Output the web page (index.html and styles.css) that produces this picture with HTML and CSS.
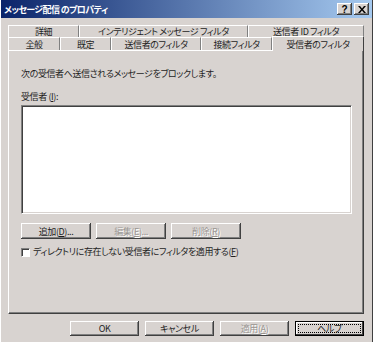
FILE: index.html
```html
<!DOCTYPE html>
<html lang="ja">
<head>
    <meta charset="UTF-8">
    <title>メッセージ配信 のプロパティ</title>
    <link rel="stylesheet" href="styles.css">
</head>
<body>
    <div class="window">
        <div class="titlebar">
            <span class="title">メッセージ配信 のプロパティ</span>
            <div class="caption-buttons">
                <span class="cap-btn help">?</span>
                <span class="cap-btn close">
                    <svg width="8" height="7" viewBox="0 0 8 7">
                        <path d="M0 0h2l2 2.5L6 0h2L5 3.5 8 7H6L4 4.5 2 7H0l3-3.5z" fill="#000"/>
                    </svg>
                </span>
            </div>
        </div>

        <div class="tabs">
            <div class="tab-row back">
                <div class="tab t-details">詳細</div>
                <div class="tab t-intel">インテリジェント メッセージ フィルタ</div>
                <div class="tab t-senderid">送信者 ID フィルタ</div>
            </div>
            <div class="tab-row front">
                <div class="tab t-general">全般</div>
                <div class="tab t-default">既定</div>
                <div class="tab t-sender">送信者のフィルタ</div>
                <div class="tab t-conn">接続フィルタ</div>
                <div class="tab t-recip active">受信者のフィルタ</div>
            </div>
        </div>

        <div class="panel">
            <p class="intro">次の受信者へ送信されるメッセージをブロックします。</p>
            <p class="label">受信者 (<u>I</u>):</p>
            <div class="listbox"></div>

            <div class="list-buttons">
                <button class="btn">追加(<u>D</u>)...</button>
                <button class="btn" disabled>編集(<u>E</u>)...</button>
                <button class="btn" disabled>削除(<u>R</u>)</button>
            </div>

            <label class="check">
                <span class="box"></span>
                <span>ディレクトリに存在しない受信者にフィルタを適用する(<u>F</u>)</span>
            </label>
        </div>

        <div class="footer">
            <button class="btn">OK</button>
            <button class="btn">キャンセル</button>
            <button class="btn" disabled>適用(<u>A</u>)</button>
            <button class="btn focused"><span class="focus-rect">ヘルプ</span></button>
        </div>
    </div>
</body>
</html>
```

FILE: styles.css
```css
body {
    margin: 0;
    padding: 0;
    background-color: #d8d3d0;
    font-family: "Noto Sans CJK JP", "Liberation Sans", sans-serif;
    font-size: 9px;
    font-feature-settings: "palt";
    letter-spacing: -0.4px;
    color: #1e1e1e;
}

.window {
    width: 373px;
    height: 342px;
    box-sizing: border-box;
    background-color: #d8d3d0;
    border-right: 1px solid #404040;
    border-left: 1px solid #fff;
    overflow: hidden;
}

.titlebar {
    height: 18px;
    display: flex;
    align-items: center;
    justify-content: space-between;
    padding: 0 3px 0 3px;
    background: linear-gradient(to right, #0a246a, #a6caf0);
}

.title {
    color: #fff;
    font-weight: bold;
    font-size: 9px;
    letter-spacing: -0.6px;
}

.caption-buttons {
    display: flex;
    gap: 2px;
}

.cap-btn {
    width: 15px;
    height: 12px;
    box-sizing: border-box;
    display: flex;
    align-items: center;
    justify-content: center;
    background-color: #d8d3d0;
    box-shadow: inset -1px -1px #404040, inset 1px 1px #fff, inset -2px -2px #808080;
    font-family: "Liberation Sans", sans-serif;
    font-weight: bold;
    font-size: 10px;
    letter-spacing: 0;
    color: #000;
}

/* tabs */
.tabs {
    margin-top: 7px;
    padding-left: 7px;
}

.tab-row {
    display: flex;
    align-items: flex-end;
}

.tab-row.back {
    height: 12px;
}

.tab-row.front {
    height: 13px;
}

.tab {
    box-sizing: border-box;
    height: 100%;
    display: flex;
    align-items: center;
    justify-content: center;
    border-top: 1px solid #fff;
    border-left: 1px solid #fff;
    border-right: 1px solid #808080;
    white-space: nowrap;
    line-height: 1;
}

.t-details { width: 71px; }
.t-intel { width: 169px; }
.t-senderid { width: 116px; }

.t-general { width: 52px; }
.t-default { width: 51px; }
.t-sender { width: 90px; }
.t-conn { width: 71px; }
.t-recip { width: 92px; }

.tab.active {
    height: 15px;
    margin-bottom: -1px;
    position: relative;
    background-color: #d8d3d0;
    border-right: 1px solid #404040;
}

/* panel */
.panel {
    width: 356px;
    height: 264px;
    margin-left: 7px;
    box-sizing: border-box;
    border-top: 1px solid #fff;
    border-left: 1px solid #fff;
    border-right: 1px solid #404040;
    border-bottom: 1px solid #404040;
    box-shadow: inset -1px -1px #808080;
    padding: 17px 0 0 12px;
}

.panel p {
    margin: 0;
    line-height: 12px;
}

.label {
    margin-top: 11px !important;
}

.listbox {
    width: 331px;
    height: 109px;
    margin-top: 2px;
    box-sizing: border-box;
    background-color: #fff;
    border-top: 1px solid #808080;
    border-left: 1px solid #808080;
    border-right: 1px solid #fff;
    border-bottom: 1px solid #fff;
    box-shadow: inset 1px 1px #404040, inset -1px -1px #d8d3d0;
}

.list-buttons {
    display: flex;
    gap: 5px;
    margin-top: 9px;
}

.btn {
    width: 70px;
    height: 16px;
    padding: 0;
    box-sizing: border-box;
    border: none;
    background-color: #d8d3d0;
    box-shadow: inset -1px -1px #404040, inset 1px 1px #fff, inset -2px -2px #808080;
    font-family: inherit;
    font-size: 9px;
    font-feature-settings: "palt";
    letter-spacing: -0.4px;
    color: #1e1e1e;
    line-height: 1;
}

.btn:disabled {
    color: #9a9692;
    text-shadow: 1px 1px #fff;
}

.btn.focused {
    box-shadow: inset 0 0 0 1px #000, inset -2px -2px #404040, inset 2px 2px #fff;
    padding: 3px;
}

.focus-rect {
    display: flex;
    align-items: center;
    justify-content: center;
    height: 100%;
    box-sizing: border-box;
    border: 1px dotted #000;
}

.check {
    display: flex;
    align-items: center;
    gap: 3px;
    margin-top: 7px;
    line-height: 12px;
}

.box {
    width: 9px;
    height: 9px;
    box-sizing: border-box;
    background-color: #fff;
    border-top: 1px solid #808080;
    border-left: 1px solid #808080;
    border-right: 1px solid #fff;
    border-bottom: 1px solid #fff;
    box-shadow: inset 1px 1px #404040;
}

/* dialog buttons */
.footer {
    display: flex;
    gap: 6px;
    padding: 7px 0 0 69px;
}

.footer .btn {
    width: 69px;
    height: 15px;
}
```
